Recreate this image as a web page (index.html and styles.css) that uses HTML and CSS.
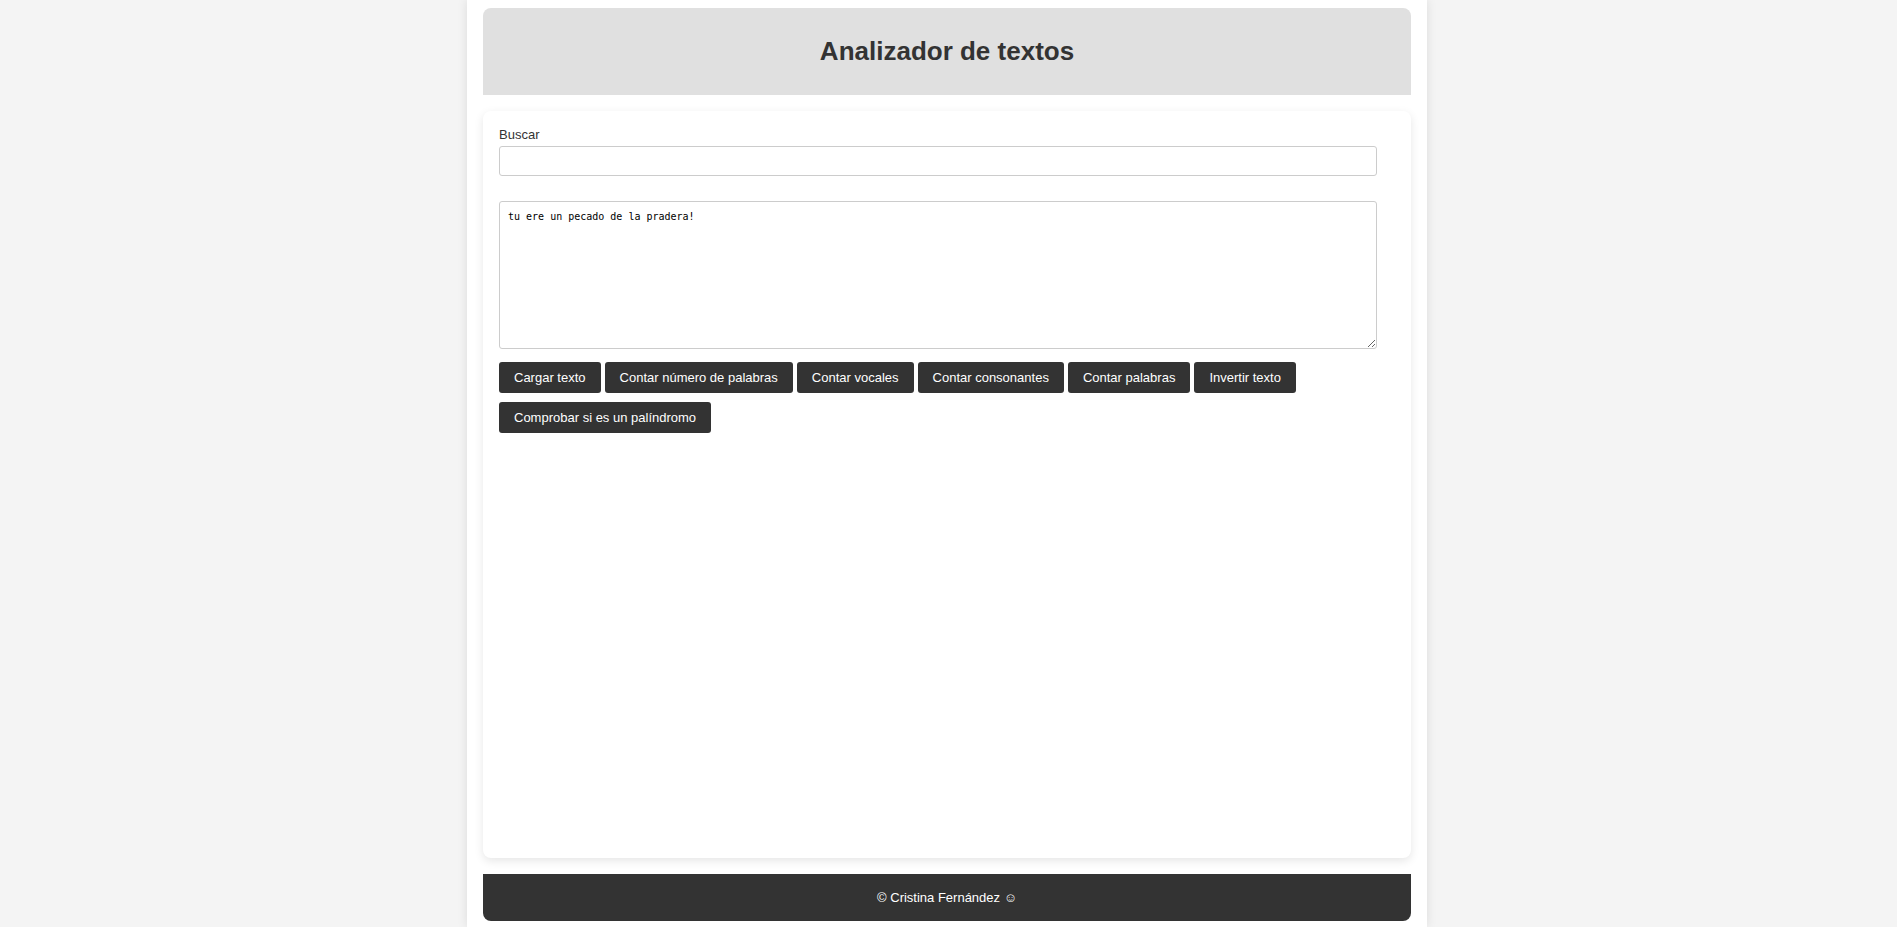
FILE: index.html
```html
<!DOCTYPE html>
<html lang="es">
<head>
<meta charset="utf-8">
<title>Analizador de textos</title>
<link rel="stylesheet" href="styles.css">
</head>
<body>
<div class="container">
  <header class="header">
    <h1 class="title">Analizador de textos</h1>
  </header>
  <main class="panel">
    <label class="label" for="buscar">Buscar</label>
    <input class="field search" type="text" id="buscar">
    <textarea class="field text" id="texto" aria-label="Texto" spellcheck="false">tu ere un pecado de la pradera!</textarea>
    <div class="actions">
      <button class="button" type="button">Cargar texto</button>
      <button class="button" type="button">Contar número de palabras</button>
      <button class="button" type="button">Contar vocales</button>
      <button class="button" type="button">Contar consonantes</button>
      <button class="button" type="button">Contar palabras</button>
      <button class="button" type="button">Invertir texto</button>
      <button class="button" type="button">Comprobar si es un palíndromo</button>
    </div>
  </main>
  <footer class="footer">© Cristina Fernández ☺</footer>
</div>
</body>
</html>
```

FILE: styles.css
```css
* {
  box-sizing: border-box;
}

body {
  margin: 0;
  padding-right: 3px;
  background: #f4f4f4;
  color: #333;
  font: 13px/15px "Liberation Sans", Arial, "DejaVu Sans", sans-serif;
}

.container {
  display: flex;
  flex-direction: column;
  gap: 16px;
  max-width: 960px;
  min-height: 100vh;
  margin: 0 auto;
  padding: 8px 16px 6px;
  background: #fff;
  box-shadow: 0 0 10px rgba(0, 0, 0, 0.1);
}

.header {
  padding: 28px 16px 29px;
  background: #e0e0e0;
  border-radius: 8px 8px 0 0;
  text-align: center;
}

.title {
  margin: 0;
  font-size: 26px;
  line-height: 30px;
}

.panel {
  display: flex;
  flex: 1;
  flex-direction: column;
  padding: 16px;
  background: #fff;
  border-radius: 8px;
  box-shadow: 0 3px 10px rgba(0, 0, 0, 0.1);
}

.label {
  line-height: 16px;
  margin-bottom: 3px;
}

.field {
  width: calc(100% - 18px);
  padding: 8px;
  border: 1px solid #ccc;
  border-radius: 3px;
  background: #fff;
  color: #000;
}

.search {
  height: 30px;
  margin-bottom: 25px;
  font: inherit;
}

.text {
  height: 148px;
  margin-bottom: 13px;
  font: 10px/13px "DejaVu Sans Mono", monospace;
  resize: vertical;
}

.actions {
  display: flex;
  flex-wrap: wrap;
  gap: 9px 4px;
}

.button {
  padding: 8px 15px;
  border: 0;
  border-radius: 3px;
  background: #333;
  color: #fff;
  font: inherit;
  cursor: pointer;
}

.footer {
  padding: 16px;
  background: #333;
  border-radius: 0 0 8px 8px;
  color: #fff;
  text-align: center;
}
```
